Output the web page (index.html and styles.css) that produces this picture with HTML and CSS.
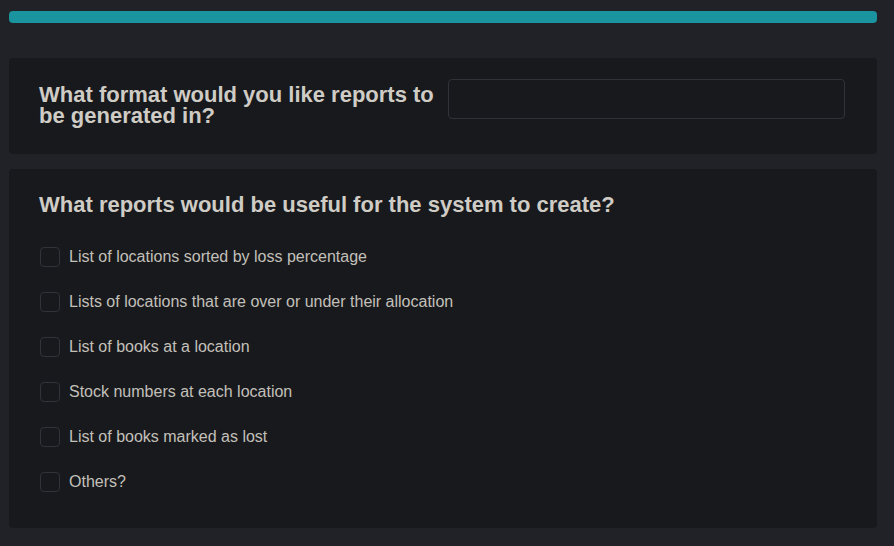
FILE: index.html
```html
<!DOCTYPE html>
<html lang="en">
<head>
<meta charset="utf-8">
<title>Survey</title>
<link rel="stylesheet" href="styles.css">
</head>
<body>
<main class="page">
  <div class="progress"><div class="progress-fill"></div></div>

  <section class="card card-inline">
    <h2 class="question">What format would you like reports to be generated in?</h2>
    <input class="text-input" type="text">
  </section>

  <section class="card card-list">
    <h2 class="question">What reports would be useful for the system to create?</h2>
    <ul class="options">
      <li class="option"><span class="box"></span><span class="label">List of locations sorted by loss percentage</span></li>
      <li class="option"><span class="box"></span><span class="label">Lists of locations that are over or under their allocation</span></li>
      <li class="option"><span class="box"></span><span class="label">List of books at a location</span></li>
      <li class="option"><span class="box"></span><span class="label">Stock numbers at each location</span></li>
      <li class="option"><span class="box"></span><span class="label">List of books marked as lost</span></li>
      <li class="option"><span class="box"></span><span class="label">Others?</span></li>
    </ul>
  </section>
</main>
</body>
</html>
```

FILE: styles.css
```css
html, body {
  margin: 0;
  padding: 0;
  background: #212227;
  font-family: "Liberation Sans", Arial, sans-serif;
}

.page {
  width: 868px;
  padding: 11px 0 0 9px;
  display: flex;
  flex-direction: column;
}

.progress {
  height: 12px;
  border-radius: 4px;
  background: #1a95a0;
  margin-bottom: 35px;
}

.progress-fill {
  height: 100%;
}

.card {
  background: #18191d;
  border-radius: 4px;
}

.card-inline {
  display: grid;
  grid-template-columns: 401px 397px;
  column-gap: 8px;
  align-items: start;
  padding: 21px 32px 28px 30px;
  margin-bottom: 15px;
}

.card-inline .question {
  margin-top: 5px;
}

.question {
  margin: 0;
  font-size: 22px;
  line-height: 21px;
  font-weight: bold;
  color: #cfccc5;
}

.text-input {
  box-sizing: border-box;
  height: 40px;
  width: 100%;
  margin: 0;
  background: #18191d;
  border: 1px solid #30323a;
  border-radius: 4px;
  padding: 0 10px;
  color: #cfccc5;
  font: 16px "Liberation Sans", Arial, sans-serif;
}

.card-list {
  padding: 25px 30px 36px 30px;
}

.options {
  list-style: none;
  margin: 32px 0 0 0;
  padding: 0;
  display: flex;
  flex-direction: column;
  gap: 25px;
}

.option {
  display: flex;
  align-items: center;
  height: 20px;
}

.box {
  box-sizing: border-box;
  width: 20px;
  height: 20px;
  margin-left: 1px;
  border: 1px solid #30333a;
  border-radius: 4px;
  background: #18191d;
  flex: none;
}

.label {
  margin-left: 9px;
  font-size: 16px;
  line-height: 20px;
  color: #c3c0ba;
}
```
